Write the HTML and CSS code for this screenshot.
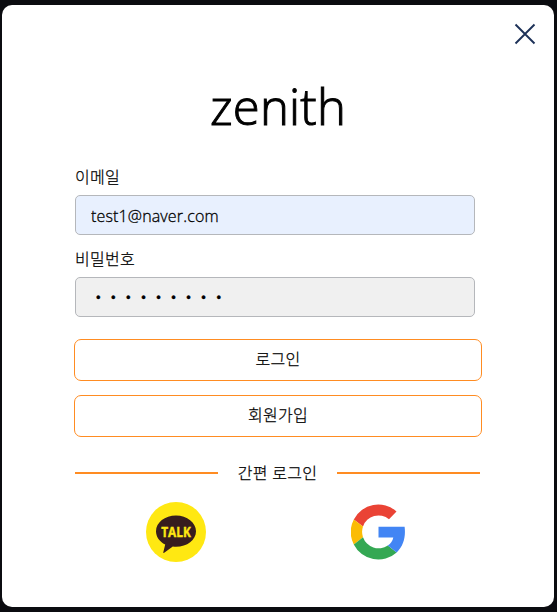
FILE: index.html
```
<!DOCTYPE html>
<html lang="ko">
<head>
<meta charset="utf-8">
<title>zenith</title>
<link rel="stylesheet" href="styles.css">
</head>
<body>
<main class="modal">
  <button class="close" type="button" aria-label="닫기">
    <svg width="22" height="22" viewBox="0 0 22 22"><path d="M1.500 1.500 20.500 20.500M20.500 1.500 1.500 20.500"/></svg>
  </button>
  <h1 class="logo">zenith</h1>
  <form class="form">
    <label class="label" for="email">이메일</label>
    <input class="field field-filled" id="email" type="text" value="test1@naver.com">
    <label class="label" for="password">비밀번호</label>
    <input class="field field-password" id="password" type="text" value="•••••••••">
    <button class="button" type="button">로그인</button>
    <button class="button" type="button">회원가입</button>
  </form>
  <div class="divider"><span>간편 로그인</span></div>
  <div class="social">
    <svg class="kakao" width="60" height="60" viewBox="0 0 60 60">
      <circle cx="30" cy="30" r="30" fill="#ffe812"/>
      <path d="M30 13.500c-11.100 0-20 7-20 15.800 0 5.700 3.600 10.500 9.200 13.300L17.300 50.200c-.2.700.3 1 .9.600l8.600-6.200c1.100.2 2.100.2 3.200.2 11.100 0 20-6.800 20-15.500S41.100 13.500 30 13.500z" fill="#371d1e"/>
      <g fill="none" stroke="#ffe812" stroke-width="0"/>
      <text class="talk" x="30" y="34.500" text-anchor="middle" textLength="29.500" lengthAdjust="spacingAndGlyphs">TALK</text>
    </svg>
    <svg class="google" width="54" height="56" viewBox="0 0 54 56">
      <path d="M45.500 7.500A27.500 27.500 0 0 0 2.800 15.400l9.200 7A16.500 16.500 0 0 1 38 15.200z" fill="#ea4335"/>
      <path d="M2.800 15.400a28 28 0 0 0 0 25l9.200-7.100a17 17 0 0 1 0-10.900z" fill="#fbbc05"/>
      <path d="M2.800 40.400A27.500 27.500 0 0 0 45.700 48.500l-8.900-7A16.500 16.500 0 0 1 12 33.300z" fill="#34a853"/>
      <path d="M27.500 22.700h26.100c1.300 10-1.100 19.300-7.900 25.800l-8.900-7c3-2 4.800-4.800 5.500-8.100H27.500z" fill="#4285f4"/>
    </svg>
  </div>
</main>
</body>
</html>
```
FILE: styles.css
```
* {
  box-sizing: border-box;
}

body {
  margin: 0;
  height: 612px;
  padding: 5px 3px 5px 2px;
  background: #0b0c10;
  color: #000;
  font: 300 16px/24px "Open Sans", "Noto Sans CJK KR", sans-serif;
  overflow: hidden;
}

.modal {
  position: relative;
  height: 602px;
  padding: 66px 72px 0;
  border-radius: 10px;
  background: #fff;
}

.close {
  position: absolute;
  top: 18px;
  right: 18px;
  width: 22px;
  height: 22px;
  padding: 0;
  border: 0;
  background: none;
}

.close svg {
  display: block;
  fill: none;
  stroke: #1d3158;
  stroke-width: 1.900;
}

.logo {
  margin: 0 0 23px;
  font: 300 49px/70px "Open Sans", sans-serif;
  letter-spacing: 0.200px;
  text-align: center;
  -webkit-text-stroke: 1px #000;
}

.form {
  display: flex;
  flex-direction: column;
  width: 408px;
}

.label,
.button,
.divider {
  font: 300 16px/24px "Noto Sans CJK KR", sans-serif;
  letter-spacing: 0.250px;
  -webkit-text-stroke: 0.250px #000;
}

.label {
  height: 31px;
  padding-left: 1px;
}

.field {
  width: 400px;
  height: 40px;
  margin: 0 0 11px 1px;
  padding: 2px 15px 0;
  border: 1px solid #b5b7bb;
  border-radius: 5px;
  background: #f0f0f0;
  color: #000;
  font: 300 16px "Open Sans", sans-serif;
  letter-spacing: 0.150px;
  -webkit-text-stroke: 0.300px #000;
}

.field-filled {
  background: #e8f0fe;
}

.field-password {
  margin-bottom: 22px;
  padding: 0 15px 0 20px;
  font: 400 13px "Liberation Sans", sans-serif;
  letter-spacing: 10.500px;
}

.button {
  height: 42px;
  margin-bottom: 14px;
  padding: 0 0 4px;
  border: 1px solid #ff8c22;
  border-radius: 7px;
  background: #fff;
  color: #000;
}

.divider {
  display: flex;
  align-items: center;
  gap: 20px;
  width: 405px;
  height: 26px;
  margin: 9px 0 0 1px;
}

.divider::before,
.divider::after {
  content: "";
  flex: 1;
  height: 2px;
  background: #ff8c22;
}

.divider span {
  margin-top: -2px;
  white-space: nowrap;
}

.social {
  display: flex;
  align-items: center;
  gap: 145px;
  margin-top: 16px;
  padding-left: 72px;
}

.talk {
  fill: #ffe812;
  stroke: #ffe812;
  stroke-width: 0.400;
  font: 700 13.500px "Open Sans", sans-serif;
  -webkit-text-stroke: 0;
}
```
